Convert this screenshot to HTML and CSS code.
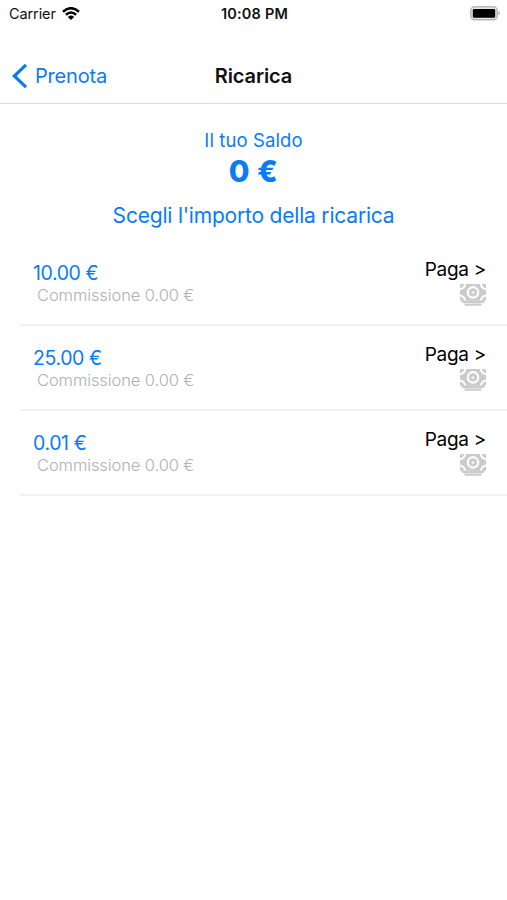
FILE: index.html
```
<!DOCTYPE html>
<html lang="it">
<head>
<title>Ricarica</title>
<meta http-equiv="content-type" content="text/html; charset=UTF-8">
<meta name="viewport" content="width=device-width, initial-scale=1">
<link rel="stylesheet" href="styles.css">
</head>

<body>
<svg width="0" height="0" class="defs">
	<symbol id="cash" viewBox="0 0 26 22">
		<rect x="0" y="0" width="26" height="16.8" rx="1" fill="#cbcbcd"/>
		<path d="M0 5.200Q4.500 4.500 5.200 0M20.800 0Q21.500 4.500 26 5.200M0 11.600Q4.500 12.300 5.200 16.800M20.800 16.800Q21.500 12.300 26 11.600" fill="none" stroke="#fff" stroke-width="2"/>
		<circle cx="13" cy="8.400" r="5.200" fill="none" stroke="#fff" stroke-width="2.200"/>
		<circle cx="13" cy="8.400" r="1.500" fill="#f2f2f2"/>
		<path d="M.8 16.600h24.400l-1.600 2.400h-21.200zM4 19.500h18l-1 2.200h-16z" fill="#cbcbcd"/>
	</symbol>
</svg>
<div class="main">
	<div class="status">
		<div class="carrier">
			<span>Carrier</span>
			<svg class="wifi" width="18" height="14" viewBox="0 0 18 14">
				<path d="M1 4.700Q9-2.300 17 4.700M3.900 7.700Q9 3.300 14.100 7.700" fill="none" stroke="#000" stroke-width="2.500"/>
				<path d="M5.900 9.900Q9 7.300 12.100 9.900L9 13z"/>
			</svg>
		</div>
		<span class="time">10:08 PM</span>
		<svg class="battery" width="30" height="15" viewBox="0 0 30 15">
			<rect x=".8" y=".8" width="26.400" height="13" rx="3.800" fill="#e6e6e6" stroke="#b8b8b8" stroke-width="1.500"/>
			<rect x="2.800" y="2.900" width="22.400" height="8.900" rx="1.300"/>
			<path d="M28.300 5.300q1.700.5 1.700 2t-1.700 2z" fill="#bdbdbd"/>
		</svg>
	</div>
	<div class="nav">
		<a class="back">
			<svg width="16" height="26" viewBox="0 0 16 26"><path d="M14 1.800L2.300 13L14 24.200" fill="none" stroke="#087cf8" stroke-width="3.200"/></svg>
			<span>Prenota</span>
		</a>
		<span class="title">Ricarica</span>
	</div>
	<div class="balance">
		<p class="label">Il tuo Saldo</p>
		<p class="amount">0 €</p>
		<p class="choose">Scegli l'importo della ricarica</p>
	</div>
	<div class="list">
		<div class="row">
			<div class="info">
				<p class="price">10.00 €</p>
				<p class="fee">Commissione 0.00 €</p>
			</div>
			<div class="pay">
				<span>Paga &gt;</span>
				<svg width="26" height="22"><use href="#cash"/></svg>
			</div>
		</div>
		<div class="row">
			<div class="info">
				<p class="price">25.00 €</p>
				<p class="fee">Commissione 0.00 €</p>
			</div>
			<div class="pay">
				<span>Paga &gt;</span>
				<svg width="26" height="22"><use href="#cash"/></svg>
			</div>
		</div>
		<div class="row">
			<div class="info">
				<p class="price">0.01 €</p>
				<p class="fee">Commissione 0.00 €</p>
			</div>
			<div class="pay">
				<span>Paga &gt;</span>
				<svg width="26" height="22"><use href="#cash"/></svg>
			</div>
		</div>
	</div>
</div>
</body>
</html>
```
FILE: styles.css
```
body			{ margin:0;padding:0;background:#fff;color:#111;font-family:Inter,"Liberation Sans",sans-serif; }
p				{ margin:0;padding:0 }
svg				{ display:block }
.defs			{ position:absolute }
.main			{ min-height:900px; }
.status			{ display:grid;grid-template-columns:1fr auto 1fr;height:27px;align-items:center;padding:0 7px 0 9px;box-sizing:border-box }
.carrier		{ display:flex;align-items:center;gap:6px;font-size:14.5px;letter-spacing:-.1px }
.time			{ font-size:14.5px;font-weight:600;letter-spacing:.2px }
.battery		{ justify-self:end }
.nav			{ display:grid;grid-template-columns:1fr auto 1fr;height:77px;align-items:center;padding:22px 12px 0;box-sizing:border-box;border-bottom:1px solid #dcdcdc;font-size:20px }
.back			{ display:flex;align-items:center;gap:7px;color:#087cf8;letter-spacing:-.2px }
.title			{ font-weight:600;letter-spacing:-.1px }
.nav::after		{ content:"" }
.balance		{ padding-top:24px;height:137px;box-sizing:border-box;text-align:center;color:#087cf8 }
.label			{ font-size:18.5px;line-height:24px;letter-spacing:.1px }
.amount			{ font-size:30px;line-height:38px;font-weight:800;letter-spacing:.4px }
.choose			{ margin-top:14px;font-size:21px;line-height:24px;letter-spacing:-.2px }
.list			{ padding-left:20px }
.row			{ display:flex;justify-content:space-between;height:84.900px;box-sizing:border-box;border-bottom:2px solid #f1f1f1;padding:16px 21px 0 13px }
.price			{ margin-top:4px;font-size:19.500px;line-height:24px;letter-spacing:-.4px;color:#087cf8 }
.fee			{ margin-left:4px;font-size:16.500px;line-height:20px;font-weight:300;letter-spacing:-.1px;color:#b0b0b2 }
.pay			{ display:flex;flex-direction:column;align-items:flex-end;font-size:19px;line-height:25px;letter-spacing:-.3px;color:#000 }
.pay svg		{ margin-top:2px }
```
